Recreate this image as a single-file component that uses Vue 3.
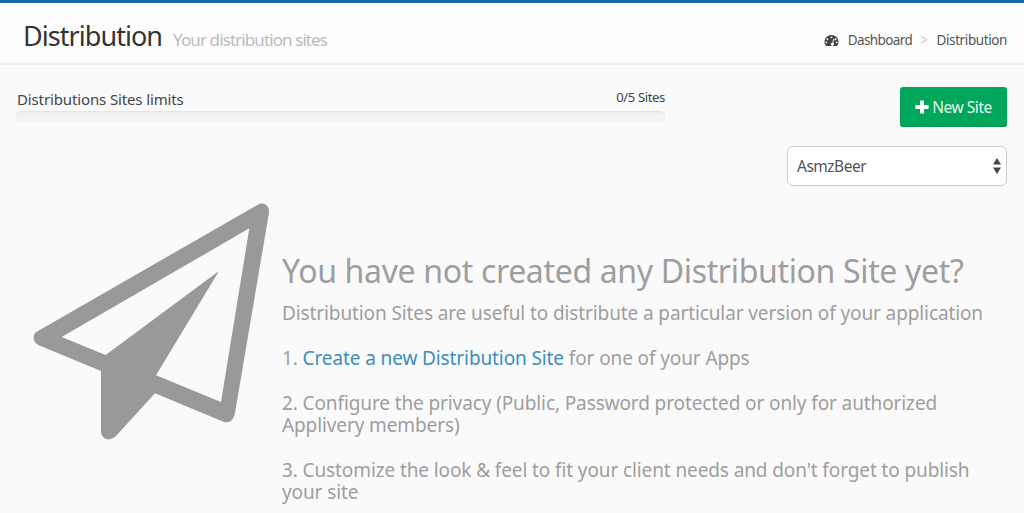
<template>
  <div class="page">
    <header class="head">
      <div class="titles">
        <h1>Distribution</h1>
        <span class="sub">Your distribution sites</span>
      </div>
      <nav class="crumbs">
        <svg class="gauge" viewBox="0 0 16 14" width="15" height="13">
          <path fill-rule="evenodd" fill="#444" d="M8 1a7.5 7.5 0 0 0-6.4 11.4c.2.3.5.5.9.5h11c.4 0 .7-.2.9-.5A7.500 7.500 0 0 0 8 1zM8 2.600a1 1 0 1 1 0 2 1 1 0 0 1 0-2zM3.600 4.600a1 1 0 1 1 0 2 1 1 0 0 1 0-2zM12.400 4.600a1 1 0 1 1 0 2 1 1 0 0 1 0-2zM2.400 8a1 1 0 1 1 0 2 1 1 0 0 1 0-2zM13.600 8a1 1 0 1 1 0 2 1 1 0 0 1 0-2zM10.300 4.800l.9.3-1.500 4.400a1.700 1.700 0 1 1-1-.2z"/>
        </svg>
        <span class="crumb first">Dashboard</span>
        <span class="sep">&gt;</span>
        <span class="crumb">Distribution</span>
      </nav>
    </header>
    <main class="content">
      <section class="top">
        <div class="limits">
          <div class="limit-labels">
            <span class="limit-name">Distributions Sites limits</span>
            <span class="limit-count">0/5 Sites</span>
          </div>
          <div class="bar"></div>
        </div>
        <div class="actions">
          <button class="new"><svg viewBox="0 0 14 14" width="14" height="14"><path fill="#fff" d="M5 1a.6.6 0 0 1 .6-.6h2.800A.6.6 0 0 1 9 1v4h4a.6.6 0 0 1 .6.6v2.800a.6.6 0 0 1-.6.6H9v4a.6.6 0 0 1-.6.6H5.600a.6.6 0 0 1-.6-.6V9H1a.6.6 0 0 1-.6-.6V5.600A.6.6 0 0 1 1 5h4z"/></svg>New Site</button>
          <div class="select">
            <span>AsmzBeer</span>
            <svg viewBox="0 0 8 16" width="8" height="16"><path fill="#444" d="M4 0l4 6.500H0zM4 16L0 9.500h8z"/></svg>
          </div>
        </div>
      </section>
      <section class="empty">
        <svg class="plane" viewBox="0 0 780 780" width="260" height="260">
          <path fill="#999" fill-rule="evenodd" d="M712 42C730 30 750 45 747 65L645 665C641 690 625 697 610 692L405 607L290 733C270 755 243 745 243 720V540L55 462C37 453 37 430 50 422ZM688 112L125 438L257 492L597 240L408 553L603 633Z"/>
        </svg>
        <div class="copy">
          <h2>You have not created any Distribution Site yet?</h2>
          <p>Distribution Sites are useful to distribute a particular version of your application</p>
          <p>1. <a>Create a new Distribution Site</a> for one of your Apps</p>
          <p>2. Configure the privacy (Public, Password protected or only for authorized Applivery members)</p>
          <p>3. Customize the look &amp; feel to fit your client needs and don't forget to publish your site</p>
        </div>
      </section>
    </main>
  </div>
</template>

<script setup>
</script>

<style>
html, body { margin: 0; background: #fafafa; }
</style>

<style scoped>
.page {
  height: 513px;
  overflow: hidden;
  background: #fafafa;
  font-family: "Noto Sans", sans-serif;
  border-top: 3px solid #1a66a6;
  box-sizing: border-box;
}
.head {
  height: 62px;
  box-sizing: border-box;
  background: #fdfdfd;
  border-bottom: 2px solid #eee;
  display: flex;
  align-items: center;
  justify-content: space-between;
  padding: 4px 17px 0 23px;
}
.titles { display: flex; align-items: baseline; gap: 11px; }
h1 { margin: 0; font-size: 27px; font-weight: 400; color: #333; letter-spacing: -0.95px; }
.sub { font-size: 17px; color: #bbb; letter-spacing: -0.9px; }
.crumbs { display: flex; align-items: center; font-size: 13.5px; color: #555; letter-spacing: -0.4px; padding-top: 10px; }
.first { letter-spacing: -0.6px; }
.gauge { margin-right: 9px; }
.sep { color: #ccc; margin: 0 9px 0 8px; }
.content { padding: 0 17px 0 16px; }
.top { display: flex; justify-content: space-between; align-items: flex-start; }
.limits { width: 649px; margin-top: 23px; }
.limit-labels { display: flex; justify-content: space-between; align-items: flex-end; height: 22px; color: #444; }
.limit-name { font-size: 15px; letter-spacing: -0.13px; margin-bottom: 1px; padding-left: 1px; }
.limit-count { font-size: 13px; letter-spacing: -0.33px; margin-bottom: 4px; }
.bar { height: 11px; margin-top: 1px; background: #f3f3f3; border-radius: 5px; box-shadow: inset 0 1px 2px rgba(0,0,0,.08); }
.actions { display: flex; flex-direction: column; align-items: flex-end; padding-top: 22px; }
.new {
  width: 107px; height: 40px; border: 0; border-radius: 3px;
  background: #00a65a; border-bottom: 1px solid #008d4c;
  font: inherit; font-size: 15.5px; letter-spacing: -0.45px; color: #e8f6ee;
  display: flex; align-items: center; justify-content: center; gap: 3px; padding: 0;
}
.select {
  margin-top: 19px; width: 220px; height: 40px; box-sizing: border-box;
  background: #fff; border: 1px solid #ccc; border-radius: 6px;
  display: flex; align-items: center; justify-content: space-between;
  padding: 0 5px 0 9px; font-size: 15.5px; letter-spacing: -0.5px; color: #555;
}
.empty { display: flex; align-items: flex-start; margin-top: 5px; }
.plane { flex: none; margin-left: 4px; }
.copy { margin-left: 2px; padding-top: 58px; color: #9e9e9e; width: 710px; }
h2 { margin: 0; font-size: 32px; line-height: 44px; font-weight: 400; letter-spacing: -0.34px; white-space: nowrap; }
p { margin: 9px 0 23px; font-size: 19px; line-height: 22px; letter-spacing: -0.11px; }
p + p { margin-top: 0; }
a { color: #3c8dbc; }
</style>
